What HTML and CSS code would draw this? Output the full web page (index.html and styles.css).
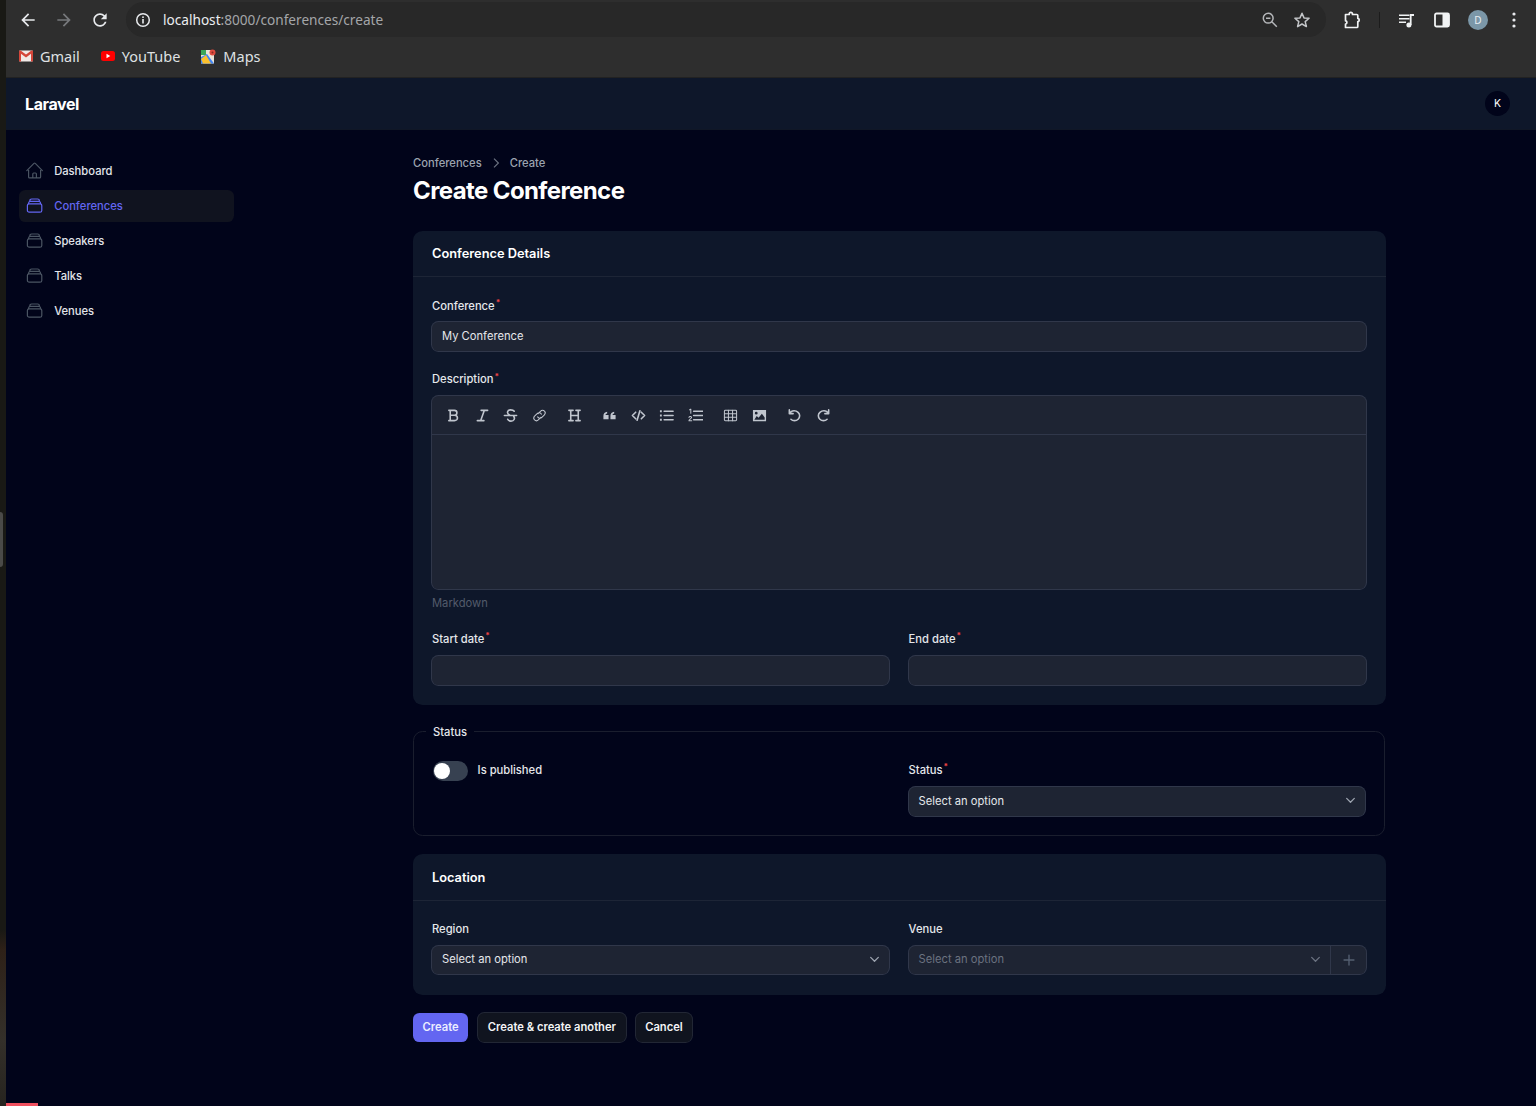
FILE: index.html
```html
<!DOCTYPE html>
<html lang="en">
<head>
<meta charset="utf-8">
<title>Create Conference</title>
<link rel="stylesheet" href="styles.css">
</head>
<body>
<div class="strip"><div class="strip-handle"></div></div>
<div class="window">
  <div class="toolbar">
    <div class="tb-btn"><svg class="ic20" viewBox="0 0 24 24"><path fill="#e8eaed" d="M20 11H7.830l5.590-5.590L12 4l-8 8 8 8 1.410-1.410L7.830 13H20v-2z"/></svg></div>
    <div class="tb-btn"><svg class="ic20" viewBox="0 0 24 24"><path fill="#77797c" d="M4 11h12.170l-5.590-5.590L12 4l8 8-8 8-1.410-1.410L16.170 13H4v-2z"/></svg></div>
    <div class="tb-btn"><svg class="ic20" viewBox="0 0 24 24"><path fill="#e8eaed" d="M17.650 6.350C16.200 4.900 14.210 4 12 4c-4.420 0-7.990 3.580-7.990 8s3.570 8 7.990 8c3.730 0 6.840-2.550 7.730-6h-2.080c-.82 2.330-3.040 4-5.650 4-3.310 0-6-2.690-6-6s2.690-6 6-6c1.660 0 3.140.69 4.220 1.780L13 11h7V4l-2.350 2.350z"/></svg></div>
    <div class="omnibox">
      <svg class="ic16 omni-info" viewBox="0 0 16 16"><circle cx="8" cy="8" r="6.300" fill="none" stroke="#e8eaed" stroke-width="1.500"/><rect x="7.200" y="7" width="1.600" height="4.500" fill="#e8eaed"/><rect x="7.200" y="4.400" width="1.600" height="1.600" fill="#e8eaed"/></svg>
      <span class="url"><span class="url-host">localhost</span>:8000/conferences/create</span>
      <div class="omni-right">
        <svg class="ic18" viewBox="0 0 18 18"><circle cx="7.200" cy="7.200" r="4.900" fill="none" stroke="#b5b7ba" stroke-width="1.500"/><path d="M5 7.200h4.400M10.800 10.800l5 5" stroke="#b5b7ba" stroke-width="1.500" fill="none"/></svg>
        <svg class="ic18" viewBox="0 0 18 18"><path d="M9 2.200l2 4.700 5.100.4-3.900 3.300 1.200 5L9 13l-4.400 2.600 1.200-5-3.900-3.300 5.100-.4z" fill="none" stroke="#c4c6c9" stroke-width="1.500" stroke-linejoin="round"/></svg>
      </div>
    </div>
    <div class="tb-btn"><svg class="ic20" viewBox="0 0 20 20"><path d="M3.500 4.500h3.700c-.3-2.800 3.600-2.800 3.300 0h4.300c.6 0 1 .4 1 1v3c1.800-.3 1.800 3.300 0 3v5c0 .6-.4 1-1 1H3.500v-3.500c1.800.2 1.800-3.500 0-3.200z" fill="none" stroke="#f1f3f4" stroke-width="1.700" stroke-linejoin="round"/></svg></div>
    <div class="tb-sep"></div>
    <div class="tb-btn"><svg class="ic20" viewBox="0 0 20 20"><path d="M3 4.500h10.500V6H3zM3 8h10.500v1.500H3zM3 11.500h7V13H3z" fill="#f1f3f4"/><path d="M14.700 15V5h3.300" fill="none" stroke="#f1f3f4" stroke-width="1.800"/><circle cx="12.900" cy="15" r="2.500" fill="#f1f3f4"/></svg></div>
    <div class="tb-btn"><svg class="ic20" viewBox="0 0 20 20"><rect x="3" y="3.500" width="14" height="13" rx="1.500" fill="none" stroke="#f1f3f4" stroke-width="1.800"/><rect x="10.500" y="3.500" width="6.500" height="13" fill="#f1f3f4"/></svg></div>
    <div class="tb-btn"><span class="chrome-avatar">D</span></div>
    <div class="tb-btn"><svg class="ic20" viewBox="0 0 20 20"><circle cx="10" cy="4" r="1.600" fill="#e8eaed"/><circle cx="10" cy="10" r="1.600" fill="#e8eaed"/><circle cx="10" cy="16" r="1.600" fill="#e8eaed"/></svg></div>
  </div>
  <div class="bookmarks">
    <div class="bm"><svg class="ic14" viewBox="0 0 14 12"><rect width="14" height="11" y=".5" rx="1" fill="#f1e9e7"/><path d="M0 1.500C0 .8.500.5 1 .5h.6L7 4.600 12.400.5h.6c.5 0 1 .3 1 1v9c0 .6-.4 1-1 1h-1V3.800L7 7.400 2 3.800v7.700H1c-.6 0-1-.4-1-1z" fill="#d4463a"/></svg><span>Gmail</span></div>
    <div class="bm"><svg class="ic14" viewBox="0 0 14 10"><rect width="14" height="10" rx="2.500" fill="#f00"/><path d="M5.500 2.800v4.400L9.300 5z" fill="#fff"/></svg><span>YouTube</span></div>
    <div class="bm"><svg class="ic15" viewBox="0 0 15 15"><rect y="1" width="13" height="13.500" fill="#e8e4d8"/><path d="M0 1h5v5H0z" fill="#3aa757"/><path d="M0 14.500V8l6-3 7 9.500z" fill="#4285f4"/><path d="M0 10l5-4 5 8.500H2z" fill="#fbc02d"/><circle cx="11.500" cy="3.500" r="3" fill="#dd4b3e"/><circle cx="11.500" cy="3.500" r="1" fill="#8a2a22"/></svg><span>Maps</span></div>
  </div>
  <header class="topbar">
    <span class="brand">Laravel</span>
    <span class="user-avatar">K</span>
  </header>
  <div class="layout">
    <nav class="sidebar">
      <a class="nav-item"><svg class="nav-icon" viewBox="0 0 24 24"><path d="M2.250 12l8.954-8.955c.44-.439 1.152-.439 1.591 0L21.750 12M4.500 9.750v10.125c0 .621.504 1.125 1.125 1.125H9.750v-4.875c0-.621.504-1.125 1.125-1.125h2.250c.621 0 1.125.504 1.125 1.125V21h4.125c.621 0 1.125-.504 1.125-1.125V9.750M8.250 21h8.250"/></svg><span>Dashboard</span></a>
      <a class="nav-item active"><svg class="nav-icon" viewBox="0 0 24 24"><path d="M6 6.878V6a2.250 2.250 0 012.250-2.250h7.500A2.250 2.250 0 0118 6v.878m-12 0c.235-.083.487-.128.75-.128h10.500c.263 0 .515.045.75.128m-12 0A2.250 2.250 0 004.500 9v.878m13.500-3A2.250 2.250 0 0119.500 9v.878m0 0a2.246 2.246 0 00-.75-.128H5.250c-.263 0-.515.045-.75.128m15 0A2.250 2.250 0 0121 12v6a2.250 2.250 0 01-2.250 2.250H5.250A2.250 2.250 0 013 18v-6c0-.98.626-1.813 1.500-2.122"/></svg><span>Conferences</span></a>
      <a class="nav-item"><svg class="nav-icon" viewBox="0 0 24 24"><path d="M6 6.878V6a2.250 2.250 0 012.250-2.250h7.500A2.250 2.250 0 0118 6v.878m-12 0c.235-.083.487-.128.75-.128h10.500c.263 0 .515.045.75.128m-12 0A2.250 2.250 0 004.500 9v.878m13.500-3A2.250 2.250 0 0119.500 9v.878m0 0a2.246 2.246 0 00-.75-.128H5.250c-.263 0-.515.045-.75.128m15 0A2.250 2.250 0 0121 12v6a2.250 2.250 0 01-2.250 2.250H5.250A2.250 2.250 0 013 18v-6c0-.98.626-1.813 1.500-2.122"/></svg><span>Speakers</span></a>
      <a class="nav-item"><svg class="nav-icon" viewBox="0 0 24 24"><path d="M6 6.878V6a2.250 2.250 0 012.250-2.250h7.500A2.250 2.250 0 0118 6v.878m-12 0c.235-.083.487-.128.75-.128h10.500c.263 0 .515.045.75.128m-12 0A2.250 2.250 0 004.500 9v.878m13.500-3A2.250 2.250 0 0119.500 9v.878m0 0a2.246 2.246 0 00-.75-.128H5.250c-.263 0-.515.045-.75.128m15 0A2.250 2.250 0 0121 12v6a2.250 2.250 0 01-2.250 2.250H5.250A2.250 2.250 0 013 18v-6c0-.98.626-1.813 1.500-2.122"/></svg><span>Talks</span></a>
      <a class="nav-item"><svg class="nav-icon" viewBox="0 0 24 24"><path d="M6 6.878V6a2.250 2.250 0 012.250-2.250h7.500A2.250 2.250 0 0118 6v.878m-12 0c.235-.083.487-.128.75-.128h10.500c.263 0 .515.045.75.128m-12 0A2.250 2.250 0 004.500 9v.878m13.500-3A2.250 2.250 0 0119.500 9v.878m0 0a2.246 2.246 0 00-.75-.128H5.250c-.263 0-.515.045-.75.128m15 0A2.250 2.250 0 0121 12v6a2.250 2.250 0 01-2.250 2.250H5.250A2.250 2.250 0 013 18v-6c0-.98.626-1.813 1.500-2.122"/></svg><span>Venues</span></a>
    </nav>
    <main class="main">
      <div class="crumbs"><span class="crumb">Conferences</span><svg class="crumb-sep" viewBox="0 0 20 20"><path d="M7.500 4.500l5.500 5.500-5.500 5.500"/></svg><span class="crumb">Create</span></div>
      <h1 class="title">Create Conference</h1>

      <section class="card details">
        <div class="card-head">Conference Details</div>
        <div class="card-body">
          <div class="field">
            <label class="label">Conference<sup class="req">*</sup></label>
            <div class="input">My Conference</div>
          </div>
          <div class="field">
            <label class="label">Description<sup class="req">*</sup></label>
            <div class="editor">
              <div class="ed-tools">
                <div class="ed-group">
                  <span class="ed-btn"><svg class="ed-ic" viewBox="0 0 16 16"><path d="M3 2.500h6c3.500 0 3.500 5.200 0 5.200H4.500m4.500 0c4.300 0 4.300 5.800 0 5.800H3M4.500 2.500v11"/></svg></span>
                  <span class="ed-btn"><svg class="ed-ic" viewBox="0 0 16 16"><path d="M6.500 2.500h7M2.500 13.500h7M10 2.500l-4 11"/></svg></span>
                  <span class="ed-btn"><svg class="ed-ic" viewBox="0 0 16 16"><path d="M1.500 8h13M12 3.500C11 2 9.500 2 8 2 4.500 2 3.500 6 7 7.500M5 12c.8 2 2.500 2 3.500 2 3.500 0 4.500-3 3-5"/></svg></span>
                  <span class="ed-btn"><svg class="ed-ic thin" viewBox="0 0 16 16"><path d="M6.500 6L9 3.500c3-3 7 1 4 4L10.500 10c-1.500 1.500-3.500 1-4.500-.5M9.500 10L7 12.500c-3 3-7-1-4-4L5.500 6c1.500-1.500 3.500-1 4.500.5"/></svg></span>
                </div>
                <div class="ed-group">
                  <span class="ed-btn"><svg class="ed-ic" viewBox="0 0 16 16"><path d="M2 2.500h4.500M2 13.500h4.500M9.500 2.500H14M9.500 13.500H14M4 2.500v11M12 2.500v11M4 8h8"/></svg></span>
                </div>
                <div class="ed-group">
                  <span class="ed-btn"><svg class="ed-ic" viewBox="0 0 16 16"><path class="fill" d="M1.500 8.500C1.500 6 3 4.300 5.500 4v1.800C4.300 6 3.800 6.800 3.800 7.500H7V12H1.500zM9 8.500C9 6 10.500 4.300 13 4v1.800c-1.200.2-1.700 1-1.700 1.700h3.200V12H9z"/></svg></span>
                  <span class="ed-btn"><svg class="ed-ic" viewBox="0 0 16 16"><path d="M5 4.500L1.500 8 5 11.500M11 4.500L14.500 8 11 11.500M9.500 3l-3 10"/></svg></span>
                  <span class="ed-btn"><svg class="ed-ic" viewBox="0 0 16 16"><path d="M5.500 3.500H15M5.500 8H15M5.500 12.500H15"/><path class="fill" d="M1 2.500h2v2H1zM1 7h2v2H1zM1 11.500h2v2H1z"/></svg></span>
                  <span class="ed-btn"><svg class="ed-ic" viewBox="0 0 16 16"><path d="M6 3.500h9.500M6 8h9.500M6 12.500h9.500"/><path class="thin" d="M1.500 2l1.500-.8v4.300M1 10c.5-1.500 3-1.200 2.800.2-.1 1-2.800 2-2.800 3.300h3"/></svg></span>
                </div>
                <div class="ed-group">
                  <span class="ed-btn"><svg class="ed-ic thin" viewBox="0 0 16 16"><rect x="1.500" y="2.500" width="13" height="11" rx="1"/><path d="M1.500 6.200h13M1.500 9.800h13M5.800 2.500v11M10.200 2.500v11"/></svg></span>
                  <span class="ed-btn"><svg class="ed-ic" viewBox="0 0 16 16"><path class="fill" fill-rule="evenodd" d="M1 2h14v12H1zM2.500 12.500h11V10L10.500 6 7 10.500 5 8.500zM4.500 4A1.500 1.500 0 104.500 7 1.500 1.500 0 004.500 4z"/></svg></span>
                </div>
                <div class="ed-group">
                  <span class="ed-btn"><svg class="ed-ic" viewBox="0 0 16 16"><path d="M2.500 2v4h4M2.800 5.800C4 3.700 5.800 3 7.500 3c3.500 0 6 2.500 6 5.200 0 3-2.500 5.300-5.500 5.300-1.500 0-2.800-.5-3.800-1.500"/></svg></span>
                  <span class="ed-btn ed-redo"><svg class="ed-ic" viewBox="0 0 16 16"><path d="M13.500 2v4h-4M13.200 5.800C12 3.700 10.200 3 8.500 3c-3.500 0-6 2.500-6 5.200 0 3 2.500 5.300 5.500 5.300 1.500 0 2.800-.5 3.800-1.500"/></svg></span>
                </div>
              </div>
              <div class="ed-area"></div>
            </div>
            <div class="hint">Markdown</div>
          </div>
          <div class="two-col">
            <div class="field">
              <label class="label">Start date<sup class="req">*</sup></label>
              <div class="input"></div>
            </div>
            <div class="field">
              <label class="label">End date<sup class="req">*</sup></label>
              <div class="input"></div>
            </div>
          </div>
        </div>
      </section>

      <fieldset class="status">
        <legend class="status-legend">Status</legend>
        <div class="two-col">
          <div class="toggle-row">
            <span class="toggle"><span class="knob"></span></span>
            <span class="label toggle-label">Is published</span>
          </div>
          <div class="field status-field">
            <label class="label">Status<sup class="req">*</sup></label>
            <div class="input select">Select an option<svg class="chev" viewBox="0 0 20 20"><path d="M5.500 7.500L10 12l4.500-4.500"/></svg></div>
          </div>
        </div>
      </fieldset>

      <section class="card location">
        <div class="card-head">Location</div>
        <div class="card-body">
          <div class="two-col">
            <div class="field">
              <label class="label">Region</label>
              <div class="input select">Select an option<svg class="chev" viewBox="0 0 20 20"><path d="M5.500 7.500L10 12l4.500-4.500"/></svg></div>
            </div>
            <div class="field">
              <label class="label">Venue</label>
              <div class="input venue">
                <div class="venue-select">Select an option<svg class="chev" viewBox="0 0 20 20"><path d="M5.500 7.500L10 12l4.500-4.500"/></svg></div>
                <div class="venue-add"><svg class="plus" viewBox="0 0 20 20"><path d="M10 4.500v11M4.500 10h11"/></svg></div>
              </div>
            </div>
          </div>
        </div>
      </section>

      <div class="actions">
        <button class="btn primary">Create</button>
        <button class="btn">Create &amp; create another</button>
        <button class="btn">Cancel</button>
      </div>
    </main>
  </div>
  <div class="progress"></div>
</div>
</body>
</html>
```

FILE: styles.css
```css
* { box-sizing: border-box; }
html, body { margin: 0; padding: 0; height: 100%; }
body {
  display: flex;
  height: 1106px;
  overflow: hidden;
  background: #01041a;
  font-family: "Inter", "Liberation Sans", sans-serif;
  color: #f3f4f6;
}
svg { display: block; flex: none; }
.strip {
  position: relative;
  width: 6px;
  flex: none;
  background: linear-gradient(180deg, #191915 0, #191915 930px, #2e2118 950px, #34302a 1040px, #26241f 1106px);
}
.strip-handle {
  position: absolute;
  left: 0;
  top: 512px;
  width: 3px;
  height: 55px;
  background: #4a4a48;
  border-radius: 0 4px 4px 0;
}
.window { position: relative; flex: 1; min-width: 0; display: flex; flex-direction: column; }

/* Browser chrome */
.toolbar {
  height: 38px;
  flex: none;
  display: flex;
  align-items: center;
  padding: 1px 4px 0;
  background: #2e2e2e;
}
.tb-btn { width: 36px; height: 36px; flex: none; display: flex; align-items: center; justify-content: center; }
.tb-sep { width: 18px; flex: none; display: flex; justify-content: center; position: relative; height: 16px; }
.tb-sep::before { content: ""; width: 1px; height: 16px; background: #1c1c1c; }
.ic20 { width: 20px; height: 20px; }
.ic18 { width: 18px; height: 18px; }
.ic16 { width: 16px; height: 16px; }
.ic14 { width: 14px; height: auto; }
.ic15 { width: 15px; height: 15px; }
.omnibox {
  flex: 1;
  height: 35px;
  margin: 0 8px 0 8px;
  border-radius: 18px;
  background: #282828;
  display: flex;
  align-items: center;
  padding-left: 9px;
}
.omni-info { margin-right: 12px; }
.url { font-family: "Noto Sans", sans-serif; font-size: 13.630px; color: #a4a6a8; white-space: nowrap; }
.url-host { color: #eceef0; }
.omni-right { margin-left: auto; display: flex; gap: 14px; padding-right: 15px; }
.chrome-avatar {
  width: 20px; height: 20px; border-radius: 50%;
  background: #7b97a8; color: #e8eef2;
  font: 10px "Noto Sans", sans-serif;
  display: flex; align-items: center; justify-content: center;
}
.bookmarks {
  height: 40px;
  flex: none;
  display: flex;
  align-items: center;
  gap: 21px;
  padding: 0 0 3px 13px;
  background: #2e2e2e;
  border-bottom: 1px solid #222;
}
.bm { display: flex; align-items: center; gap: 7px; font: 14.500px "Noto Sans", sans-serif; color: #dfe1e3; }

/* App header */
.topbar {
  height: 52px;
  flex: none;
  display: flex;
  align-items: center;
  justify-content: space-between;
  padding: 0 26px 0 19px;
  background: #0e172a;
  border-bottom: 1px solid #101726;
}
.brand { font-size: 16px; font-weight: 700; letter-spacing: -.4px; color: #fff; margin-top: 1px; }
.user-avatar {
  width: 25px; height: 25px; border-radius: 50%;
  background: #01041a; color: #fff;
  font-size: 10.500px; font-weight: 400;
  display: flex; align-items: center; justify-content: center;
}

/* Layout */
.layout { flex: 1; display: flex; min-height: 0; }
.sidebar {
  width: 407px;
  flex: none;
  padding: 25px 0 0 13px;
  display: flex;
  flex-direction: column;
  gap: 3px;
}
.nav-item {
  width: 215px;
  height: 32px;
  display: flex;
  align-items: center;
  gap: 9.600px;
  padding: 0 6.400px;
  border-radius: 6.400px;
  font-size: 11.200px;
  font-weight: 500;
  color: #e2e5ea;
}
.nav-item.active { background: #10131f; color: #6366f1; }
.nav-icon { width: 19.200px; height: 19.200px; fill: none; stroke: #4b5563; stroke-width: 1.500; stroke-linecap: round; stroke-linejoin: round; }
.active .nav-icon { stroke: #6366f1; }

.main { width: 973px; flex: none; padding-top: 25px; }
.crumbs { display: flex; align-items: center; height: 16px; gap: 6px; }
.crumb { font-size: 11.200px; font-weight: 500; color: #9ca3af; }
.crumb-sep { width: 16px; height: 16px; fill: none; stroke: #6b7280; stroke-width: 1.500; }
.title { margin: 6px 0 25.200px; font-size: 24px; line-height: 28.800px; font-weight: 700; letter-spacing: -.6px; color: #fff; }

.card { background: #0e172a; border-radius: 9.600px; }
.card-head {
  height: 45.600px;
  display: flex;
  align-items: center;
  padding: 0 19px;
  font-size: 12.800px;
  font-weight: 600;
  color: #fff;
  border-bottom: 1px solid #1d2536;
}
.location .card-head { height: 46.600px; padding-top: 1px; }
.card-body { padding: 21px 20px 20.600px 19px; display: flex; flex-direction: column; gap: 21px; }
.field { display: flex; flex-direction: column; gap: 8px; min-width: 0; }
.label { font-size: 11.200px; line-height: 16px; font-weight: 500; color: #e5e7eb; margin: -.8px 0 .8px; }
.details .two-col .label { margin: -1.600px 0 1.600px; }
.req { color: #ef4444; font-size: 8px; line-height: 0; vertical-align: super; font-weight: 700; margin-left: 1px; }
.input {
  height: 28.800px;
  display: flex;
  align-items: center;
  padding: 0 10px 1.500px;
  border-radius: 6.400px;
  background: #1e2433;
  box-shadow: 0 0 0 1px #30374a;
  font-size: 11.200px;
  color: #e5e7eb;
}
.details .card-body { padding: 21.800px 20px 19.800px 19px; }
.editor { border-radius: 6.400px; background: #1e2433; box-shadow: 0 0 0 1px #30374a; overflow: hidden; }
.ed-tools { height: 39px; display: flex; align-items: center; gap: 6px; padding-left: 7px; border-bottom: 1px solid #30374a; }
.ed-group { display: flex; }
.ed-btn { width: 28.800px; height: 28px; display: flex; align-items: center; justify-content: center; }
.ed-redo { padding-left: 2px; }
.ed-ic { width: 15px; height: 15px; fill: none; stroke: #c0c5ce; stroke-width: 1.700; stroke-linecap: round; stroke-linejoin: round; }
.ed-ic.thin, .ed-ic .thin { stroke-width: 1.100; }
.ed-ic .fill { fill: #c0c5ce; stroke: none; }
.ed-area { height: 153.600px; }
.hint { font-size: 11.200px; line-height: 16px; color: #535b6b; margin: -1.600px 0 .2px; }
.two-col { display: grid; grid-template-columns: 1fr 1fr; gap: 19.200px; }

.status {
  margin: 19px 1px 17.600px 0;
  padding: 21px 19px 19.600px;
  min-width: 0;
  border: 1px solid #1a1e2e;
  border-radius: 9.600px;
}
.status-legend { margin-left: -7px; padding: 0 7px; font-size: 11.200px; line-height: 16px; font-weight: 500; color: #e5e7eb; }
.status-field { margin-top: 1.400px; gap: 8.600px; }
.toggle-row { display: flex; align-items: flex-start; gap: 9.600px; }
.toggle { width: 35px; height: 20px; border-radius: 10px; background: #374151; display: flex; align-items: center; padding-left: 1px; flex: none; }
.knob { width: 16px; height: 16px; border-radius: 50%; background: #fff; }
.label.toggle-label { margin: 1px 0 0; }

.select { justify-content: space-between; }
.chev { width: 17px; height: 17px; fill: none; stroke: #9ca3af; stroke-width: 1.500; stroke-linecap: round; stroke-linejoin: round; margin-right: -4px; }
.venue { padding: 0; color: #6b7280; }
.venue .chev { stroke: #6b7280; }
.venue-select { flex: 1; height: 100%; display: flex; align-items: center; justify-content: space-between; padding: 0 10px 1.500px; }
.venue-add { width: 36px; height: 100%; display: flex; align-items: center; justify-content: center; border-left: 1px solid #30374a; }
.plus { width: 18px; height: 18px; fill: none; stroke: #556072; stroke-width: 1.500; stroke-linecap: round; }

.actions { display: flex; gap: 10px; align-items: center; margin-top: 18px; }
.btn {
  height: 29px;
  padding: 0 9.600px;
  border: 0;
  border-radius: 6.400px;
  background: #10141f;
  box-shadow: 0 0 0 1px #222735;
  font: 600 11.200px "Inter", "Liberation Sans", sans-serif;
  color: #f3f4f6;
}
.btn.primary { background: #6366f1; box-shadow: none; color: #eceeff; }
.progress { position: absolute; left: 0; bottom: 0; width: 32px; height: 3px; background: #f0505f; }
```
